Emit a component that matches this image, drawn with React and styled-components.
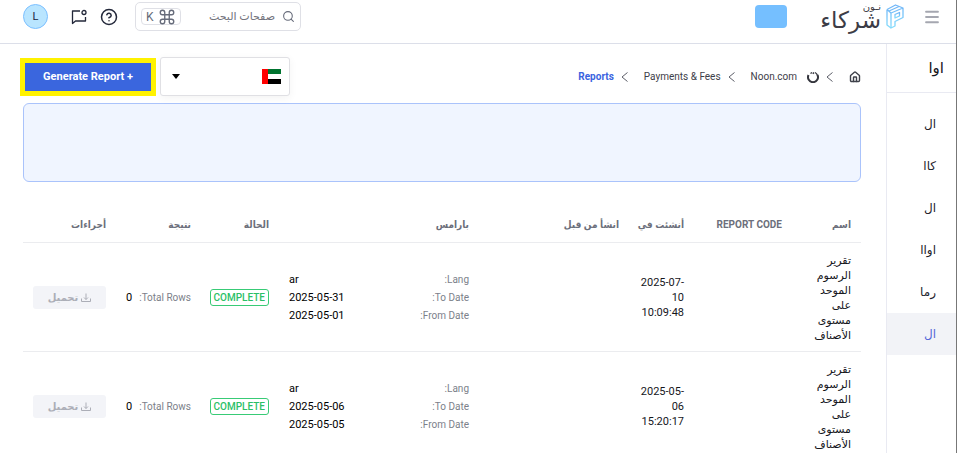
import React from "react";
import styled, { createGlobalStyle } from "styled-components";
import { Search, Command, CircleHelp, House, Menu } from "lucide-react";

const GlobalStyle = createGlobalStyle`
  * {
    box-sizing: border-box;
  }

  body {
    margin: 0;
    background: #fff;
    color: #15161c;
    font-family: "Roboto", "DejaVu Sans", sans-serif;
    font-size: 11px;
  }

  button, input, select {
    font-family: inherit;
  }
`;

const Page = styled.div`
  min-height: 100vh;
  display: flex;
  flex-direction: column;
  overflow: hidden;
  border-right: 1px solid #777;
`;

const Header = styled.header`
  display: flex;
  align-items: center;
  justify-content: space-between;
  height: 44px;
  padding: 0 15px 10px 23px;
  border-bottom: 1px solid #dcdfe9;
`;

const HeaderGroup = styled.div`
  display: flex;
  align-items: center;
`;

const IconButton = styled.button`
  display: flex;
  padding: 0;
  border: 0;
  background: none;
  color: ${(props) => props.$color || "#23283a"};
  margin-left: ${(props) => props.$gap || 0}px;
`;

const Brand = styled.a`
  display: flex;
  align-items: center;
  gap: 5px;
  color: #3c3c46;
  text-decoration: none;
`;

const BrandText = styled.span`
  display: flex;
  flex-direction: column;
  align-items: flex-start;
`;

const BrandSmall = styled.span`
  font-size: 10px;
  line-height: 8px;
`;

const BrandLarge = styled.span`
  font-size: 23px;
  line-height: 20px;
`;

const StorePill = styled.div`
  width: 32px;
  height: 23px;
  margin-right: 33px;
  border-radius: 4px;
  background: #75bfff;
`;

const SearchBox = styled.label`
  display: flex;
  align-items: center;
  width: 166px;
  height: 29px;
  margin-left: 17px;
  padding: 0 5px;
  border: 1px solid #dfe0e6;
  border-radius: 5px;
  color: #666b7a;
`;

const SearchInput = styled.input`
  flex: 1;
  min-width: 0;
  padding: 0 7px;
  border: 0;
  outline: 0;
  background: none;
  font-size: 11px;

  &::placeholder {
    color: #72737c;
    opacity: 1;
  }
`;

const Shortcut = styled.kbd`
  display: flex;
  align-items: center;
  gap: 4px;
  height: 17px;
  padding: 0 4px;
  border: 1px solid #dfe0e6;
  border-radius: 4px;
  font-family: inherit;
  font-size: 12px;
`;

const Avatar = styled.button`
  width: 25px;
  height: 25px;
  padding: 0;
  border: 1px solid #7cc0ff;
  border-radius: 50%;
  background: #b9e5ff;
  color: #1b2340;
  font-size: 11px;
`;

const Body = styled.div`
  flex: 1;
  display: flex;
`;

const Sidebar = styled.aside`
  flex: none;
  width: 70px;
  border-left: 1px solid #e9eaf2;
`;

const SidebarTitle = styled.h2`
  margin: 0;
  height: 49px;
  padding-right: 12px;
  border-bottom: 1px solid #e9eaf2;
  font-size: 15px;
  font-weight: 400;
  line-height: 48px;
`;

const Nav = styled.nav`
  display: flex;
  flex-direction: column;
  padding-top: 10px;
`;

const NavItem = styled.a`
  height: 42px;
  padding-right: 20px;
  background: ${(props) => (props.$active ? "#f2f3f7" : "none")};
  color: ${(props) => (props.$active ? "#5468d8" : "#23232b")};
  font-size: 12px;
  line-height: 42px;
  text-decoration: none;
`;

const Main = styled.main`
  flex: 1;
  min-width: 0;
  padding: 13px 25px 0 23px;
`;

const Toolbar = styled.div`
  display: flex;
  align-items: center;
  justify-content: space-between;
  height: 39px;
`;

const Breadcrumb = styled.nav`
  display: flex;
  align-items: center;
  font-size: 10px;
`;

const Crumb = styled.a`
  display: flex;
  align-items: center;
  gap: 10px;
  color: ${(props) => (props.$active ? "#3a64df" : "#3e4049")};
  font-weight: ${(props) => (props.$active ? 700 : 400)};
  text-decoration: none;
`;

const Separator = styled.svg`
  width: 7px;
  height: 10px;
  margin: 0 16px 0 7px;
  fill: none;
  stroke: #5c5e68;
`;

const Actions = styled.div`
  display: flex;
  align-items: center;
  gap: 4px;
  margin-left: -3px;
`;

const CountryButton = styled.button`
  display: flex;
  align-items: center;
  justify-content: space-between;
  width: 130px;
  height: 39px;
  padding: 0 8px 0 11px;
  border: 1px solid #e0e0e4;
  border-radius: 3px;
  background: #fff;
  box-shadow: 0 2px 8px rgba(0, 0, 0, 0.05);
`;

const Highlight = styled.div`
  padding: 5px;
  background: #fff200;
`;

const GenerateButton = styled.button`
  display: block;
  width: 126px;
  height: 28px;
  padding: 0;
  border: 0;
  background: #3a66de;
  color: #fff;
  font-size: 11px;
  font-weight: 700;
`;

const Notice = styled.section`
  height: 79px;
  margin-top: 7px;
  border: 1px solid #aac3fb;
  border-radius: 6px;
  background: #f0f5ff;
`;

const Table = styled.table`
  width: 100%;
  margin-top: 24px;
  border-collapse: collapse;
  table-layout: fixed;
`;

const Th = styled.th`
  height: 36px;
  padding: 2px 10px 0;
  border-bottom: 1px solid #ebecef;
  color: #6c6f7b;
  font-family: "Roboto", "DejaVu Sans Condensed", "DejaVu Sans", sans-serif;
  font-size: 10px;
  font-weight: 700;
  text-align: right;
  white-space: nowrap;
`;

const Td = styled.td`
  height: 109px;
  padding: 2px 10px 0;
  border-bottom: 1px solid #ebecef;
  line-height: 15px;
  text-align: right;
`;

const DateText = styled.div`
  direction: ltr;
  text-align: right;
`;

const Param = styled.div`
  display: flex;
  justify-content: space-between;
  line-height: 18px;
`;

const Label = styled.span`
  color: #7c7f8a;
  font-size: 10px;
`;

const Value = styled.span`
  color: #000;
  direction: ltr;
`;

const Badge = styled.span`
  display: inline-block;
  padding: 0 3px;
  border: 1px solid #38cb76;
  border-radius: 3px;
  color: #2bbf67;
  font-size: 10px;
  font-weight: 500;
`;

const DownloadButton = styled.button`
  display: flex;
  align-items: center;
  justify-content: center;
  gap: 3px;
  width: 73px;
  height: 23px;
  padding: 0;
  border: 0;
  border-radius: 3px;
  background: #f3f4f8;
  color: #acaeb7;
  font-size: 10px;
  font-weight: 700;
`;

const columns = [
  { label: "اسم", width: 69 },
  { label: "REPORT CODE", width: 98 },
  { label: "أنشئت في", width: 65 },
  { label: "انشأ من قبل", width: 150 },
  { label: "بارامس", width: 200 },
  { label: "الحالة", width: 78 },
  { label: "نتيجة", width: 85 },
  { label: "أجراءات", width: 93 },
];

const reports = [
  { date: "2025-07-10", time: "10:09:48", to: "2025-05-31", from: "2025-05-01" },
  { date: "2025-05-06", time: "15:20:17", to: "2025-05-06", from: "2025-05-05" },
];

const links = ["ال", "كاا", "ال", "اواا", "رما", "ال"];

const LogoMark = () => (
  <svg width="18" height="25" viewBox="0 0 18 25" fill="none" strokeWidth="1.3" strokeLinejoin="round">
    <defs>
      <linearGradient id="mark" x1="0" y1="0" x2="0" y2="1">
        <stop offset="0" stopColor="#6fb4f7" />
        <stop offset="1" stopColor="#86dcfc" />
      </linearGradient>
    </defs>
    <g stroke="url(#mark)">
      <path d="M1 5.500 L9.500 1 L17 4 V13.500 L9 17.500 V22 L5 24 V9 L17 4" />
      <path d="M1 5.500 V21 L5 24 M1 5.500 L5 9 M3 7 L13 2.500" />
      <path d="M9 10.500 L13.500 8.500 V12 L9 14 Z" />
    </g>
  </svg>
);

const MessageIcon = () => (
  <svg width="16" height="16" viewBox="0 0 16 16" fill="none" stroke="currentColor" strokeWidth="1.300" strokeLinejoin="round">
    <path d="M9 2 H1.500 V14.500 L4.500 12 H14.500 V8" />
    <circle cx="13" cy="3.500" r="2" />
  </svg>
);

const NoonIcon = () => (
  <svg width="12" height="12" viewBox="0 0 12 12" fill="none" stroke="#34353d">
    <path strokeWidth="2" d="M1.500 4 A5 5 0 1 0 10.500 4" />
    <path strokeWidth="1.400" d="M10.500 4.500 A5 5 0 0 0 8 1.500 M3.500 2.500 L5 1.500 M5.800 2.800 L7 1.500" />
  </svg>
);

const Arrow = () => (
  <Separator viewBox="0 0 7 10" aria-hidden="true">
    <path d="M6.500 0.500 L1 5 L6.500 9.500" />
  </Separator>
);

const UaeFlag = () => (
  <svg width="19" height="15" viewBox="0 0 19 15" role="img" aria-label="UAE">
    <path fill="#fff" d="M0 0h19v15H0z" />
    <path fill="#00732f" d="M6 0h13v5H6z" />
    <path d="M6 10h13v5H6z" />
    <path fill="red" d="M0 0h6v15H0z" />
  </svg>
);

const DownloadIcon = () => (
  <svg width="10" height="10" viewBox="0 0 10 10" fill="none" stroke="currentColor">
    <path d="M5 0.500 V6.500 M3 4.500 L5 6.500 L7 4.500 M0.500 5.500 V8.500 H9.500 V5.500" />
  </svg>
);

const App = () => {
  return (
    <Page dir="rtl">
      <GlobalStyle />
      <Header>
        <HeaderGroup>
          <IconButton aria-label="Menu" $color="#a5a7b0" $gap={19}>
            <Menu size={18} strokeWidth={2.400} />
          </IconButton>
          <Brand href="#">
            <LogoMark />
            <BrandText>
              <BrandSmall>نـون</BrandSmall>
              <BrandLarge>شركاء</BrandLarge>
            </BrandText>
          </Brand>
          <StorePill />
        </HeaderGroup>
        <HeaderGroup>
          <SearchBox>
            <Search size={13} strokeWidth={2} />
            <SearchInput placeholder="صفحات البحث" aria-label="صفحات البحث" />
            <Shortcut>
              <Command size={18} strokeWidth={1.800} />
              <span>K</span>
            </Shortcut>
          </SearchBox>
          <IconButton aria-label="Help" $gap={13}>
            <CircleHelp size={18} strokeWidth={2} />
          </IconButton>
          <IconButton aria-label="Messages" $gap={23}>
            <MessageIcon />
          </IconButton>
          <Avatar>L</Avatar>
        </HeaderGroup>
      </Header>
      <Body>
        <Sidebar>
          <SidebarTitle>اوا</SidebarTitle>
          <Nav>
            {links.map((link, i) => (
              <NavItem href="#" key={i} $active={i === links.length - 1}>
                {link}
              </NavItem>
            ))}
          </Nav>
        </Sidebar>
        <Main>
          <Toolbar>
            <Breadcrumb>
              <Crumb href="#" aria-label="Home">
                <House size={12} strokeWidth={2.800} />
              </Crumb>
              <Arrow />
              <Crumb href="#">
                <NoonIcon />
                Noon.com
              </Crumb>
              <Arrow />
              <Crumb href="#">Payments &amp; Fees</Crumb>
              <Arrow />
              <Crumb href="#" $active>
                Reports
              </Crumb>
            </Breadcrumb>
            <Actions>
              <CountryButton aria-label="Country">
                <UaeFlag />
                <svg width="8" height="5" viewBox="0 0 8 5">
                  <path d="M0 0h8L4 5z" />
                </svg>
              </CountryButton>
              <Highlight>
                <GenerateButton dir="ltr">Generate Report +</GenerateButton>
              </Highlight>
            </Actions>
          </Toolbar>
          <Notice />
          <Table>
            <colgroup>
              {columns.map((col) => (
                <col key={col.label} style={{ width: `${(col.width / 838) * 100}%` }} />
              ))}
            </colgroup>
            <thead>
              <tr>
                {columns.map((col) => (
                  <Th key={col.label}>{col.label}</Th>
                ))}
              </tr>
            </thead>
            <tbody>
              {reports.map((report) => (
                <tr key={report.date}>
                  <Td>تقرير الرسوم الموحد على مستوى الأصناف</Td>
                  <Td />
                  <Td>
                    <DateText>
                      {report.date} {report.time}
                    </DateText>
                  </Td>
                  <Td />
                  <Td>
                    <Param>
                      <Label>Lang:</Label>
                      <Value>ar</Value>
                    </Param>
                    <Param>
                      <Label>To Date:</Label>
                      <Value>{report.to}</Value>
                    </Param>
                    <Param>
                      <Label>From Date:</Label>
                      <Value>{report.from}</Value>
                    </Param>
                  </Td>
                  <Td>
                    <Badge>COMPLETE</Badge>
                  </Td>
                  <Td>
                    <Param>
                      <Label>Total Rows:</Label>
                      <Value>0</Value>
                    </Param>
                  </Td>
                  <Td>
                    <DownloadButton disabled>
                      <DownloadIcon />
                      تحميل
                    </DownloadButton>
                  </Td>
                </tr>
              ))}
            </tbody>
          </Table>
        </Main>
      </Body>
    </Page>
  );
};

export default App;
